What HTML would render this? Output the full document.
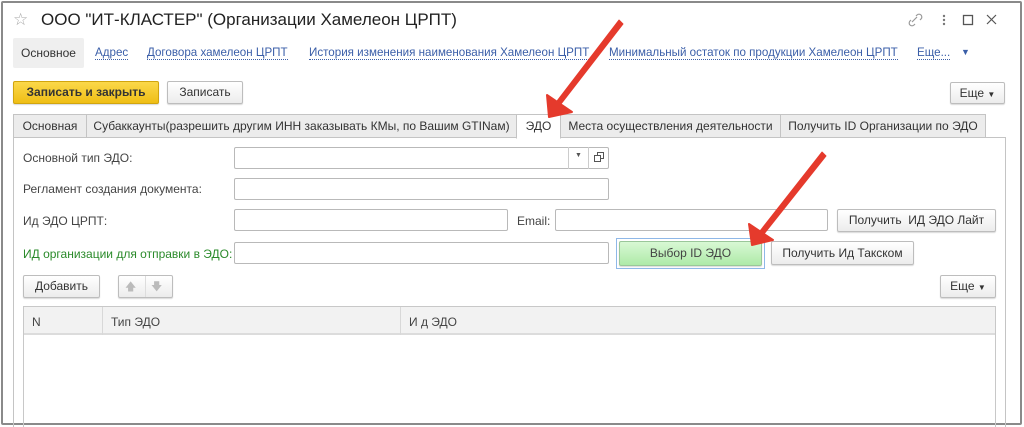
<!DOCTYPE html>
<html><head><meta charset="utf-8"><style>
*{box-sizing:border-box;margin:0;padding:0}
body{width:1024px;height:427px;background:#fff;font-family:"Liberation Sans",sans-serif;font-size:12px;color:#333;position:relative;overflow:hidden}
.a{position:absolute}
.frame{left:1px;top:1px;width:1021px;height:424px;border:2px solid #8a8a8a;border-radius:2px}
.lnk{color:#3a5ea8;border-bottom:1px dotted #3a5ea8;line-height:13px;top:46px;font-size:11.6px}
.btn{background:linear-gradient(#fff,#ececec);border:1px solid #bdbdbd;border-radius:2px;box-shadow:0 1px 1px rgba(0,0,0,.15);text-align:center;color:#333}
.inp{border:1px solid #b9b9b9;border-radius:2px;background:#fff;height:22px}
.tab{top:114px;height:24px;border:1px solid #c4c4c4;background:#ececec;text-align:center;line-height:23px;color:#333}
.lbl{color:#444}
</style></head><body>
<div class="a frame"></div>
<div class="a" style="left:13px;top:10px;font-size:17px;color:#aaa">☆</div>
<div class="a" style="left:41px;top:10px;font-size:17px;color:#222">ООО "ИТ-КЛАСТЕР" (Организации Хамелеон ЦРПТ)</div>
<svg class="a" style="left:908px;top:12px" width="90" height="16" viewBox="0 0 90 16">
<path d="M4 10l5-5M3 8l-1 1a2.5 2.5 0 0 0 4 4l1-1M8 4l1-1a2.5 2.5 0 0 1 4 4l-1 1" stroke="#999" stroke-width="1.2" fill="none"/>
<circle cx="36" cy="4" r="1.2" fill="#777"/><circle cx="36" cy="8" r="1.2" fill="#777"/><circle cx="36" cy="12" r="1.2" fill="#777"/>
<rect x="55.5" y="3.5" width="9" height="9" stroke="#555" stroke-width="1.3" fill="none"/>
<path d="M79 3l9 9M88 3l-9 9" stroke="#555" stroke-width="1.2"/>
</svg>
<div class="a" style="left:13px;top:38px;width:71px;height:30px;background:#efefef;border-radius:2px;line-height:30px;text-align:center;color:#333">Основное</div>
<div class="a lnk" style="left:95px">Адрес</div>
<div class="a lnk" style="left:147px">Договора хамелеон ЦРПТ</div>
<div class="a lnk" style="left:309px">История изменения наименования Хамелеон ЦРПТ</div>
<div class="a lnk" style="left:609px">Минимальный остаток по продукции Хамелеон ЦРПТ</div>
<div class="a lnk" style="left:917px">Еще...</div>
<div class="a" style="left:961px;top:47px;font-size:9px;color:#3a5ea8">▼</div>
<div class="a btn" style="left:13px;top:81px;width:146px;height:23px;background:linear-gradient(#fbd84a,#efbe15);border-color:#d1a50e;font-weight:bold;line-height:21px;color:#333">Записать и закрыть</div>
<div class="a btn" style="left:167px;top:81px;width:76px;height:23px;line-height:21px">Записать</div>
<div class="a btn" style="left:950px;top:82px;width:55px;height:22px;line-height:20px">Еще <span style="font-size:8px">▼</span></div>
<div class="a" style="left:13px;top:137px;width:993px;height:290px;border:1px solid #c4c4c4;border-bottom:none"></div>
<div class="a tab" style="left:13px;width:74px">Основная</div>
<div class="a tab" style="left:86px;width:431px">Субаккаунты(разрешить другим ИНН заказывать КМы, по Вашим GTINам)</div>
<div class="a tab" style="left:516px;width:45px;background:#fff;border-bottom-color:#fff;height:25px">ЭДО</div>
<div class="a tab" style="left:560px;width:221px">Места осуществления деятельности</div>
<div class="a tab" style="left:780px;width:206px">Получить ID Организации по ЭДО</div>
<div class="a lbl" style="left:23px;top:151px">Основной тип ЭДО:</div>
<div class="a inp" style="left:234px;top:147px;width:375px"></div>
<div class="a" style="left:568px;top:147px;width:1px;height:22px;background:#ccc"></div>
<div class="a" style="left:588px;top:147px;width:1px;height:22px;background:#ccc"></div>
<div class="a" style="left:575px;top:152px;font-size:7px;color:#555">▼</div>
<svg class="a" style="left:593px;top:151px" width="12" height="12"><rect x="1.5" y="4.5" width="6" height="6" fill="none" stroke="#555"/><path d="M4.5 4.5V1.5h6v6H7.5" fill="none" stroke="#555"/></svg>
<div class="a lbl" style="left:23px;top:182px">Регламент создания документа:</div>
<div class="a inp" style="left:234px;top:178px;width:375px"></div>
<div class="a lbl" style="left:23px;top:214px">Ид ЭДО ЦРПТ:</div>
<div class="a inp" style="left:234px;top:209px;width:274px"></div>
<div class="a lbl" style="left:517px;top:214px">Email:</div>
<div class="a inp" style="left:555px;top:209px;width:273px"></div>
<div class="a btn" style="left:837px;top:209px;width:159px;height:23px;line-height:21px">Получить &nbsp;ИД ЭДО Лайт</div>
<div class="a" style="left:23px;top:247px;color:#2a8a2a">ИД организации для отправки в ЭДО:</div>
<div class="a inp" style="left:234px;top:242px;width:375px"></div>
<div class="a" style="left:616px;top:238px;width:149px;height:31px;border:1px solid #8fb8e8"></div>
<div class="a btn" style="left:619px;top:241px;width:143px;height:25px;background:linear-gradient(#d8f8d4,#aeeaa8);border-color:#9ac79a;line-height:23px;color:#444">Выбор ID ЭДО</div>
<div class="a btn" style="left:771px;top:241px;width:143px;height:24px;line-height:22px">Получить Ид Такском</div>
<div class="a btn" style="left:23px;top:275px;width:77px;height:23px;line-height:21px">Добавить</div>
<div class="a btn" style="left:118px;top:275px;width:55px;height:23px"></div>
<div class="a" style="left:145px;top:276px;width:1px;height:21px;background:#ddd"></div>
<div class="a" style="left:125px;top:278px;color:#bbb;font-size:11px">🡅</div>
<div class="a" style="left:151px;top:278px;color:#bbb;font-size:11px">🡇</div>
<div class="a btn" style="left:940px;top:275px;width:56px;height:23px;line-height:21px">Еще <span style="font-size:8px">▼</span></div>
<div class="a" style="left:23px;top:306px;width:973px;height:121px;border:1px solid #c8c8c8;border-bottom:none"></div>
<div class="a" style="left:24px;top:307px;width:971px;height:28px;background:#f2f2f2;border-bottom:2px solid #dcdcdc"></div>
<div class="a" style="left:102px;top:307px;width:1px;height:28px;background:#d8d8d8"></div>
<div class="a" style="left:400px;top:307px;width:1px;height:28px;background:#d8d8d8"></div>
<div class="a lbl" style="left:32px;top:315px">N</div>
<div class="a lbl" style="left:111px;top:315px">Тип ЭДО</div>
<div class="a lbl" style="left:409px;top:315px">И д ЭДО</div>
<svg class="a" style="left:0;top:0" width="1024" height="427">
<g fill="#e53a2c" stroke="#e53a2c" stroke-linejoin="round">
<path d="M619 20l4 4-62 80-4-3z" stroke-width="1"/>
<path d="M549 117l-2-22 25 17z" stroke-width="2"/>
<path d="M822 152l4 4-62 78-4-3z" stroke-width="1"/>
<path d="M752 245l-3-21 24 16z" stroke-width="2"/>
</g></svg>
</body></html>
